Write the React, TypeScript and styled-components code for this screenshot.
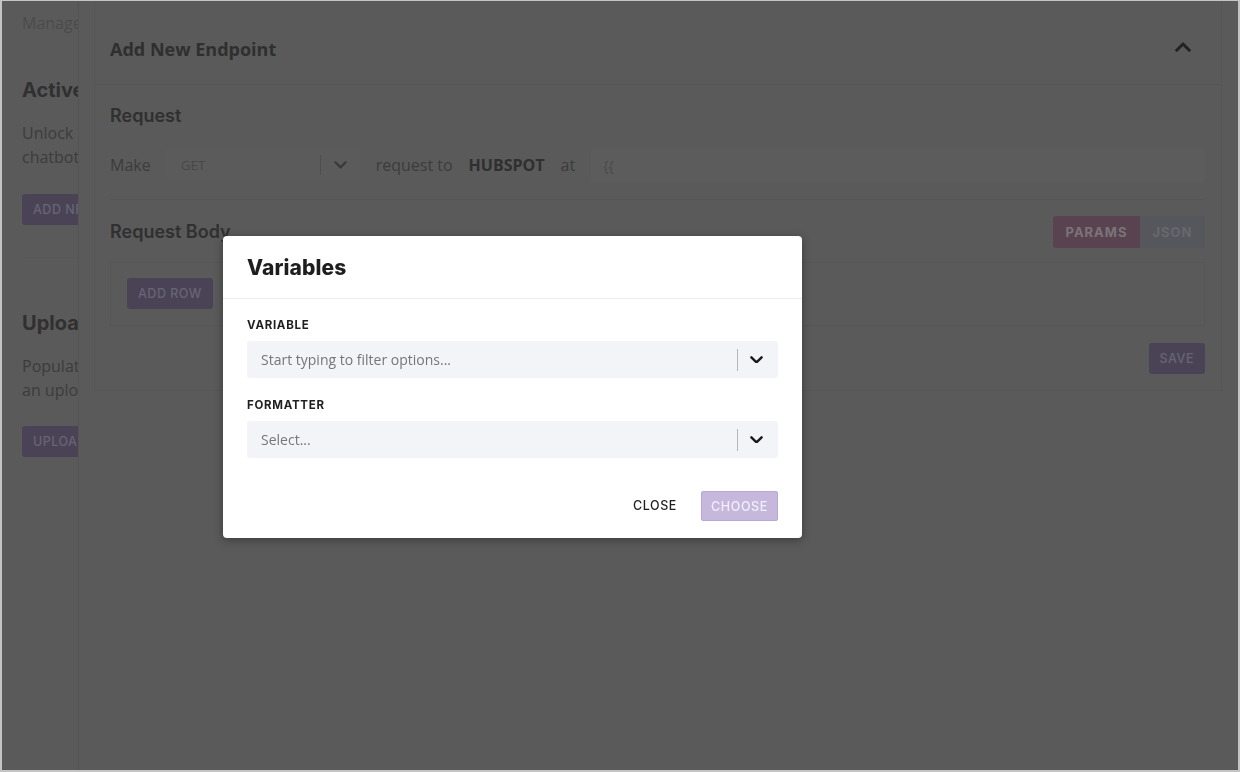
import React from "react";
import styled, { createGlobalStyle } from "styled-components";

const GlobalStyle = createGlobalStyle`
  html, body { margin: 0; padding: 0; background: #ffffff; }
  body { font-family: "Open Sans", "Noto Sans", sans-serif; }
  * { box-sizing: border-box; }
`;

const GEO = `"Inter", "Noto Sans", sans-serif`;

const Frame = styled.div`
  position: relative;
  width: 1240px;
  height: 772px;
  border: 2px solid #c4c4c4;
  border-top-width: 1px;
  background: #5a5a5a;
  display: flex;
  overflow: hidden;
`;

const LeftPane = styled.aside`
  width: 76px;
  flex: none;
  overflow: hidden;
`;

const LeftInner = styled.div`
  width: 380px;
  padding-left: 20px;
  padding-top: 10px;
  display: flex;
  flex-direction: column;
`;

const Muted = styled.div`
  font-size: 16px;
  line-height: 24px;
  color: #4b4b4b;
  white-space: nowrap;
`;

const SideHeading = styled.h2<{ $top: number }>`
  margin: ${(p) => p.$top}px 0 0;
  font-family: ${GEO};
  font-size: 20px;
  line-height: 28px;
  font-weight: 700;
  color: #303030;
  white-space: nowrap;
`;

const SideText = styled.p`
  margin: 17px 0 0;
  font-size: 16px;
  line-height: 24px;
  color: #3c3c3c;
  white-space: nowrap;
`;

const DimButton = styled.button<{ $top?: number }>`
  align-self: flex-start;
  margin-top: ${(p) => p.$top ?? 0}px;
  height: 31px;
  padding: 0 11px;
  border: none;
  border-radius: 3px;
  background: #494355;
  color: #686376;
  font-family: ${GEO};
  font-size: 12.5px;
  font-weight: 500;
  letter-spacing: 0.5px;
  text-transform: uppercase;
  white-space: nowrap;
`;

const SideDivider = styled.hr`
  margin: 32px 0 0;
  border: none;
  border-top: 1px solid #575757;
  width: 100%;
`;

const Drawer = styled.section`
  flex: 1;
  border-left: 1px solid #545454;
  padding: 0 16px 0 15px;
`;

const Card = styled.div`
  border: 1px solid #565656;
  border-top: none;
  background: #5a5a5a;
`;

const CardHeader = styled.div`
  display: flex;
  align-items: center;
  justify-content: space-between;
  padding: 36px 30px 23px 15px;
  border-bottom: 1px solid #555555;
`;

const Title = styled.h1`
  margin: 0;
  font-size: 18px;
  line-height: 24px;
  font-weight: 700;
  color: #2f2f2f;
`;

const CardBody = styled.div`
  padding: 19px 16px 16px 15px;
  display: flex;
  flex-direction: column;
`;

const SectionTitle = styled.h3`
  margin: 0;
  font-family: ${GEO};
  font-size: 18px;
  line-height: 24px;
  font-weight: 600;
  color: #303030;
`;

const MakeRow = styled.div`
  margin-top: 20px;
  display: flex;
  align-items: center;
  gap: 16px;
  height: 34px;
`;

const Word = styled.span<{ $bold?: boolean }>`
  font-size: 16px;
  font-weight: ${(p) => (p.$bold ? 700 : 400)};
  color: ${(p) => (p.$bold ? "#2f2f2f" : "#3c3c3c")};
  white-space: nowrap;
`;

const MethodSelect = styled.div`
  width: 195px;
  height: 34px;
  margin-left: -2px;
  display: flex;
  align-items: center;
  padding-left: 16px;
  background: #5b5b5b;
  border-radius: 3px;
  font-size: 13.5px;
  color: #484848;
`;

const MethodValue = styled.span`
  flex: 1;
`;

const DimSep = styled.span`
  width: 1px;
  height: 20px;
  background: #4e4e4e;
`;

const DimChevronBox = styled.span`
  width: 39px;
  display: flex;
  justify-content: center;
  color: #3a3a3a;
`;

const UrlInput = styled.div`
  flex: 1;
  height: 34px;
  display: flex;
  align-items: center;
  padding-left: 12px;
  background: #5c5c5c;
  border-radius: 3px;
  font-size: 14px;
  color: #4a4a4a;
`;

const Rule = styled.hr`
  margin: 17px 0 0;
  border: none;
  border-top: 1px solid #555555;
`;

const BodyHead = styled.div`
  margin-top: 16px;
  display: flex;
  align-items: center;
  justify-content: space-between;
`;

const Toggle = styled.div`
  display: flex;
  height: 32px;
`;

const ToggleBtn = styled.button<{ $active?: boolean }>`
  border: none;
  height: 32px;
  padding: 0;
  width: ${(p) => (p.$active ? 87 : 65)}px;
  background: ${(p) => (p.$active ? "#5a4350" : "#55575d")};
  color: ${(p) => (p.$active ? "#7a7479" : "#66686f")};
  font-family: ${GEO};
  font-size: 13px;
  font-weight: 700;
  letter-spacing: 1px;
  border-radius: ${(p) => (p.$active ? "3px 0 0 3px" : "0 3px 3px 0")};
`;

const RowsBox = styled.div`
  margin-top: 14px;
  height: 64px;
  border: 1px solid #565656;
  padding: 15px 16px;
  display: flex;
`;

const SaveRow = styled.div`
  display: flex;
  justify-content: flex-end;
  margin-top: 17px;
`;

const Backdrop = styled.div`
  position: fixed;
  inset: 0;
`;

const Dialog = styled.div`
  position: absolute;
  left: 223px;
  top: 236px;
  width: 579px;
  background: #ffffff;
  border-radius: 4px;
  box-shadow: 0 2px 10px rgba(0, 0, 0, 0.35);
  display: flex;
  flex-direction: column;
`;

const DialogHeader = styled.div`
  height: 63px;
  padding: 0 24px;
  display: flex;
  align-items: center;
  border-bottom: 1px solid #eaecf1;
`;

const DialogTitle = styled.h2`
  margin: 0;
  font-family: ${GEO};
  font-size: 21px;
  font-weight: 800;
  letter-spacing: 0.1px;
  color: #1e1e1e;
`;

const DialogBody = styled.div`
  padding: 18px 24px 0;
  display: flex;
  flex-direction: column;
`;

const FieldLabel = styled.label<{ $top?: number }>`
  margin-top: ${(p) => p.$top ?? 0}px;
  font-family: ${GEO};
  font-size: 11.5px;
  line-height: 16px;
  font-weight: 700;
  letter-spacing: 0.7px;
  color: #1f1f1f;
`;

const SelectBox = styled.div`
  margin-top: 8px;
  height: 37px;
  display: flex;
  align-items: center;
  background: #f3f4f7;
  border-radius: 3px;
  padding-left: 14px;
`;

const Placeholder = styled.span`
  flex: 1;
  font-size: 14px;
  color: #767676;
`;

const Sep = styled.span`
  width: 1px;
  height: 22px;
  background: #b5b5b5;
`;

const ChevronBox = styled.span`
  width: 40px;
  padding-right: 3px;
  display: flex;
  justify-content: center;
  color: #1a1a1a;
`;

const DialogFooter = styled.div`
  padding: 33px 24px 17px;
  display: flex;
  justify-content: flex-end;
  align-items: center;
  gap: 24px;
`;

const TextButton = styled.button`
  border: none;
  background: transparent;
  padding: 0 0 2px;
  font-family: ${GEO};
  font-size: 12.5px;
  font-weight: 500;
  letter-spacing: 0.6px;
  color: #1e1e1e;
`;

const ChooseButton = styled.button`
  width: 77px;
  height: 30px;
  border: 1px solid #b9a8d5;
  border-radius: 2px;
  background: #c6b7dd;
  color: #f3effa;
  font-family: ${GEO};
  font-size: 12.5px;
  font-weight: 500;
  letter-spacing: 0.6px;
`;

const Chevron = ({ up, size = 13, w = 2.6 }: { up?: boolean; size?: number; w?: number }) => (
  <svg width={size} height={size * 0.6} viewBox="0 0 14 8" fill="none">
    <path
      d={up ? "M1.5 7 L7 1.5 L12.5 7" : "M1.5 1.2 L7 6.7 L12.5 1.2"}
      stroke="currentColor"
      strokeWidth={w}
      strokeLinecap="round"
      strokeLinejoin="round"
    />
  </svg>
);

const HeaderChevron = styled.span`
  color: #222222;
  display: flex;
  margin-top: -4px;
`;

export default function App() {
  return (
    <>
      <GlobalStyle />
      <Frame>
        <LeftPane>
          <LeftInner>
            <Muted>Manage your integrations</Muted>
            <SideHeading $top={41}>Active Integrations</SideHeading>
            <SideText>
              Unlock new abilities for your
              <br />
              chatbot by adding endpoints.
            </SideText>
            <DimButton $top={25}>Add New Endpoint</DimButton>
            <SideDivider />
            <SideHeading $top={51}>Upload Data</SideHeading>
            <SideText>
              Populate your knowledge base with
              <br />
              an uploaded file.
            </SideText>
            <DimButton $top={24}>Upload File</DimButton>
          </LeftInner>
        </LeftPane>
        <Drawer>
          <Card>
            <CardHeader>
              <Title>Add New Endpoint</Title>
              <HeaderChevron>
                <Chevron up size={16} w={2.6} />
              </HeaderChevron>
            </CardHeader>
            <CardBody>
              <SectionTitle>Request</SectionTitle>
              <MakeRow>
                <Word>Make</Word>
                <MethodSelect>
                  <MethodValue>GET</MethodValue>
                  <DimSep />
                  <DimChevronBox>
                    <Chevron size={13} w={2.4} />
                  </DimChevronBox>
                </MethodSelect>
                <Word>request to</Word>
                <Word $bold>HUBSPOT</Word>
                <Word>at</Word>
                <UrlInput>{"{{"}</UrlInput>
              </MakeRow>
              <Rule />
              <BodyHead>
                <SectionTitle>Request Body</SectionTitle>
                <Toggle>
                  <ToggleBtn $active>PARAMS</ToggleBtn>
                  <ToggleBtn>JSON</ToggleBtn>
                </Toggle>
              </BodyHead>
              <RowsBox>
                <DimButton>Add Row</DimButton>
              </RowsBox>
              <SaveRow>
                <DimButton>Save</DimButton>
              </SaveRow>
            </CardBody>
          </Card>
        </Drawer>
        <Backdrop>
          <Dialog role="dialog">
            <DialogHeader>
              <DialogTitle>Variables</DialogTitle>
            </DialogHeader>
            <DialogBody>
              <FieldLabel>VARIABLE</FieldLabel>
              <SelectBox>
                <Placeholder>Start typing to filter options...</Placeholder>
                <Sep />
                <ChevronBox>
                  <Chevron size={13} w={2.6} />
                </ChevronBox>
              </SelectBox>
              <FieldLabel $top={19}>FORMATTER</FieldLabel>
              <SelectBox>
                <Placeholder>Select...</Placeholder>
                <Sep />
                <ChevronBox>
                  <Chevron size={13} w={2.6} />
                </ChevronBox>
              </SelectBox>
            </DialogBody>
            <DialogFooter>
              <TextButton>CLOSE</TextButton>
              <ChooseButton>CHOOSE</ChooseButton>
            </DialogFooter>
          </Dialog>
        </Backdrop>
      </Frame>
    </>
  );
}
